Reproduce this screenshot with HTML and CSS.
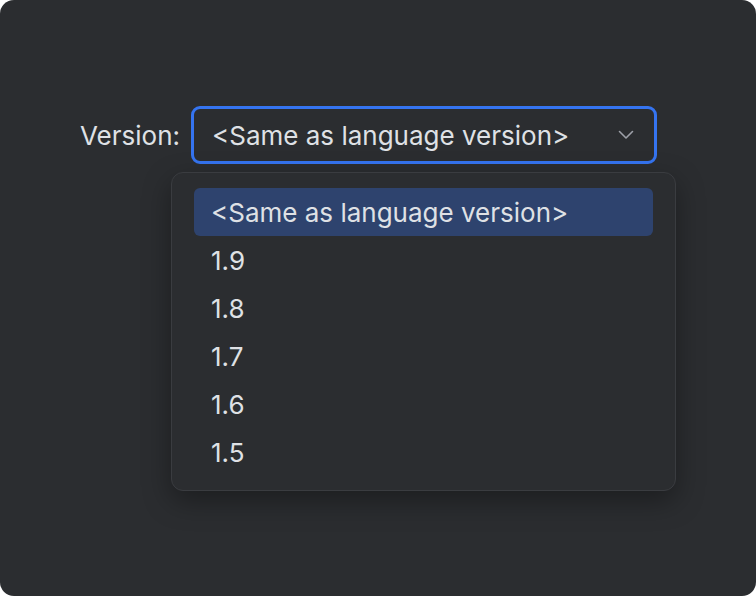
FILE: index.html
```html
<!DOCTYPE html>
<html>
<head>
<meta charset="utf-8">
<link rel="stylesheet" href="styles.css">
</head>
<body>
<div class="window">
  <div class="row">
    <span class="label">Version:</span>
    <div class="combo-wrap">
      <div class="combo">
        <span class="value">&lt;Same as language version&gt;</span>
        <svg class="chev" width="16" height="10" viewBox="0 0 16 10"><path d="M1.5 1.5 L8 8 L14.5 1.5" fill="none" stroke="#9da0a8" stroke-width="1.6" stroke-linecap="round" stroke-linejoin="round"/></svg>
      </div>
      <div class="popup">
        <div class="item selected">&lt;Same as language version&gt;</div>
        <div class="item">1.9</div>
        <div class="item">1.8</div>
        <div class="item">1.7</div>
        <div class="item">1.6</div>
        <div class="item">1.5</div>
      </div>
    </div>
  </div>
</div>
</body>
</html>
```
FILE: styles.css
```css
html, body {
  margin: 0;
  padding: 0;
  background: #ffffff;
}
.window {
  width: 756px;
  height: 596px;
  box-sizing: border-box;
  background: #2b2d30;
  border-radius: 14px;
  padding: 106px 0 0 80px;
  font-family: Inter, "Noto Sans", sans-serif;
  color: #dfe1e5;
  font-size: 26px;
}
.row {
  display: flex;
  align-items: center;
  gap: 11px;
}
.label {
  color: #dfe1e5;
}
.combo-wrap {
  position: relative;
}
.combo {
  width: 466px;
  height: 58px;
  box-sizing: border-box;
  border: 3px solid #3574f0;
  border-radius: 9px;
  display: flex;
  align-items: center;
  justify-content: space-between;
  padding: 0 20px 0 18px;
}
.chev {
  display: block;
}
.popup {
  position: absolute;
  left: -20px;
  top: 66px;
  width: 505px;
  height: 319px;
  box-sizing: border-box;
  background: #2b2d30;
  border: 1px solid #3a3c40;
  border-radius: 12px;
  box-shadow: 0 10px 28px rgba(0, 0, 0, 0.35);
  padding: 15px 22px;
}
.item {
  height: 48px;
  display: flex;
  align-items: center;
  padding-left: 17px;
  border-radius: 6px;
}
.item.selected {
  background: #2e436e;
}
```
